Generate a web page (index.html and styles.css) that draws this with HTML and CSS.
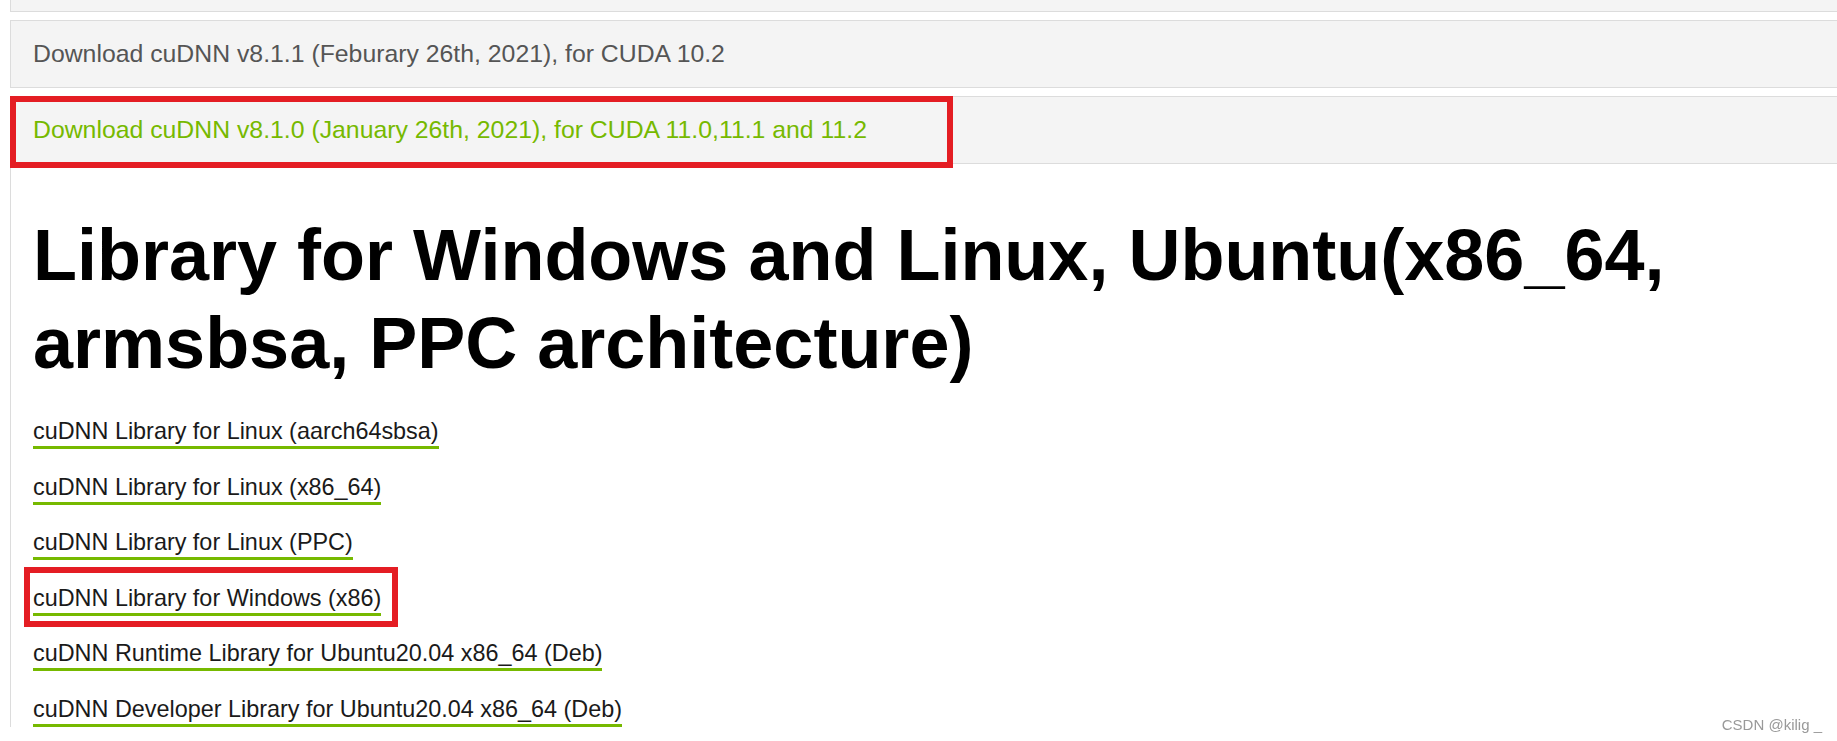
FILE: index.html
```html
<!DOCTYPE html>
<html lang="en">
  <head>
    <meta charset="UTF-8" />
    <meta name="viewport" content="width=device-width, initial-scale=1.0" />
    <title>cuDNN Archive</title>
    <link rel="stylesheet" href="styles.css">
  </head>
  <body>
    <div class="page">
      <div class="release-list">
        <div class="release release-top"></div>
        <div class="release">
          <a href="#">Download cuDNN v8.1.1 (Feburary 26th, 2021), for CUDA 10.2</a>
        </div>
        <div class="release release-open">
          <a href="#">Download cuDNN v8.1.0 (January 26th, 2021), for CUDA 11.0,11.1 and 11.2</a>
          <span class="mark mark-release"></span>
        </div>
      </div>

      <div class="release-body">
        <h1>Library for Windows and Linux, Ubuntu(x86_64, armsbsa, PPC architecture)</h1>
        <ul class="downloads">
          <li><a href="#">cuDNN Library for Linux (aarch64sbsa)</a></li>
          <li><a href="#">cuDNN Library for Linux (x86_64)</a></li>
          <li><a href="#">cuDNN Library for Linux (PPC)</a></li>
          <li>
            <a href="#">cuDNN Library for Windows (x86)</a>
            <span class="mark mark-link"></span>
          </li>
          <li><a href="#">cuDNN Runtime Library for Ubuntu20.04 x86_64 (Deb)</a></li>
          <li><a href="#">cuDNN Developer Library for Ubuntu20.04 x86_64 (Deb)</a></li>
        </ul>
      </div>
    </div>

    <div class="watermark">CSDN @kilig _</div>
  </body>
</html>
```

FILE: styles.css
```css
body {
  margin: 0;
  overflow: hidden;
  background: #fff;
  font-family: "Liberation Sans", Arial, sans-serif;
  color: #1a1a1a;
}

.page {
  padding-left: 10px;
}

/* Aufklapp-Leisten */
.release {
  position: relative;
  display: flex;
  align-items: center;
  box-sizing: border-box;
  height: 68px;
  margin-bottom: 8px;
  padding-left: 22px;
  background: #f4f4f4;
  border: 1px solid #dcdcdc;
  border-right: none;
  font-size: 24.8px;
}

.release a {
  color: #555;
  text-decoration: none;
}

.release-top {
  margin-top: -56px;
}

.release-open {
  margin-bottom: 0;
}

.release-open a {
  color: #76b900;
}

/* rote Markierungen */
.mark {
  position: absolute;
  box-sizing: border-box;
  border: 6px solid #e41d23;
  pointer-events: none;
}

.mark-release {
  left: -1px;
  top: -1px;
  width: 943px;
  height: 72px;
}

.mark-link {
  left: -9px;
  top: -17px;
  width: 374px;
  height: 60px;
}

.release-body {
  border-left: 1px solid #dcdcdc;
  padding-left: 22px;
  padding-top: 1px;
}

h1 {
  max-width: 1700px;
  margin: 46px 0 30px;
  font-size: 72px;
  line-height: 88px;
  font-weight: 700;
  color: #000;
}

.downloads {
  list-style: none;
  margin: 0;
  padding: 0;
}

.downloads li {
  position: relative;
  display: flex;
  margin-bottom: 23.6px;
}

.downloads a {
  display: block;
  font-size: 23.4px;
  line-height: 28px;
  padding-bottom: 1px;
  border-bottom: 3px solid #76b900;
  color: #1a1a1a;
  text-decoration: none;
}

.watermark {
  position: fixed;
  right: 15px;
  top: 716px;
  font-size: 15px;
  line-height: 17px;
  color: #999;
}
```
